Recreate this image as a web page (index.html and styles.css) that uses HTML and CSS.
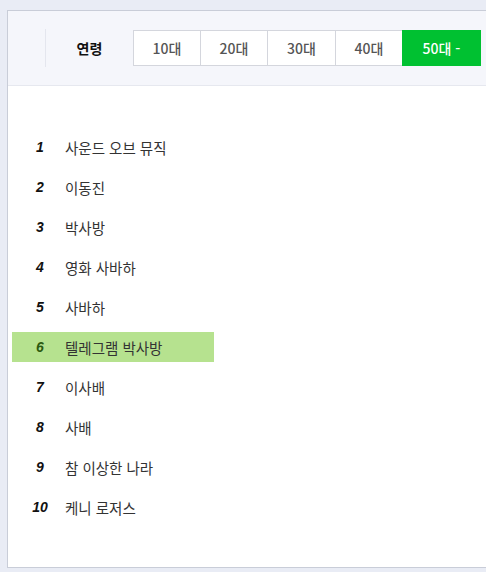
FILE: index.html
```html
<!DOCTYPE html>
<html lang="ko">
<head>
<meta charset="utf-8">
<link rel="stylesheet" href="styles.css">
</head>
<body>
<div class="panel">
  <div class="filter">
    <span class="sep"></span>
    <span class="label">연령</span>
    <div class="tabs">
      <span class="tab">10대</span>
      <span class="tab">20대</span>
      <span class="tab wide">30대</span>
      <span class="tab">40대</span>
      <span class="tab active">50대 -</span>
    </div>
  </div>
  <ol class="rank-list">
    <li class="row"><span class="num">1</span><span class="kw">사운드 오브 뮤직</span></li>
    <li class="row"><span class="num">2</span><span class="kw">이동진</span></li>
    <li class="row"><span class="num">3</span><span class="kw">박사방</span></li>
    <li class="row"><span class="num">4</span><span class="kw">영화 사바하</span></li>
    <li class="row"><span class="num">5</span><span class="kw">사바하</span></li>
    <li class="row hl"><span class="num">6</span><span class="kw">텔레그램 박사방</span></li>
    <li class="row"><span class="num">7</span><span class="kw">이사배</span></li>
    <li class="row"><span class="num">8</span><span class="kw">사배</span></li>
    <li class="row"><span class="num">9</span><span class="kw">참 이상한 나라</span></li>
    <li class="row"><span class="num">10</span><span class="kw">케니 로저스</span></li>
  </ol>
</div>
</body>
</html>
```
FILE: styles.css
```css
html, body {
  margin: 0;
  padding: 0;
}
body {
  background: #e9ecf5;
  overflow: hidden;
  width: 486px;
  height: 572px;
  font-family: "Noto Sans CJK KR", "Noto Sans", sans-serif;
}
.panel {
  margin: 10px 0 0 7px;
  width: 500px;
  height: 556px;
  border: 1px solid #c9cdd8;
  border-right: none;
  background: #ffffff;
}
.filter {
  height: 74px;
  background: #f5f6fb;
  border-bottom: 1px solid #e6e8ef;
  display: flex;
  align-items: center;
  padding-left: 37px;
}
.sep {
  width: 1px;
  height: 38px;
  background: #e4e6ee;
}
.label {
  width: 87px;
  text-align: center;
  font-weight: bold;
  font-size: 14px;
  color: #111;
}
.tabs {
  display: flex;
}
.tab {
  width: 66px;
  height: 34px;
  border: 1px solid #d4d6dd;
  border-right: none;
  background: #fff;
  display: flex;
  align-items: center;
  justify-content: center;
  font-size: 14px;
  font-weight: 500;
  color: #555;
}
.tab.wide {
  width: 67px;
}
.tab.active {
  width: 79px;
  height: 36px;
  border: none;
  background: #00c131;
  color: #fff;
}
.rank-list {
  list-style: none;
  margin: 0;
  padding: 46px 0 0 4px;
  display: flex;
  flex-direction: column;
  gap: 10px;
}
.row {
  width: 202px;
  height: 30px;
  display: flex;
  align-items: center;
}
.num {
  width: 50px;
  padding-left: 3px;
  text-align: center;
  font-family: "Liberation Sans", Arial, sans-serif;
  font-weight: bold;
  font-style: italic;
  font-size: 14px;
  color: #111;
}
.kw {
  font-size: 14.5px;
  color: #333;
}
.row.hl {
  background: #b6e28f;
}
.row.hl .num {
  color: #2b5a10;
}
```
